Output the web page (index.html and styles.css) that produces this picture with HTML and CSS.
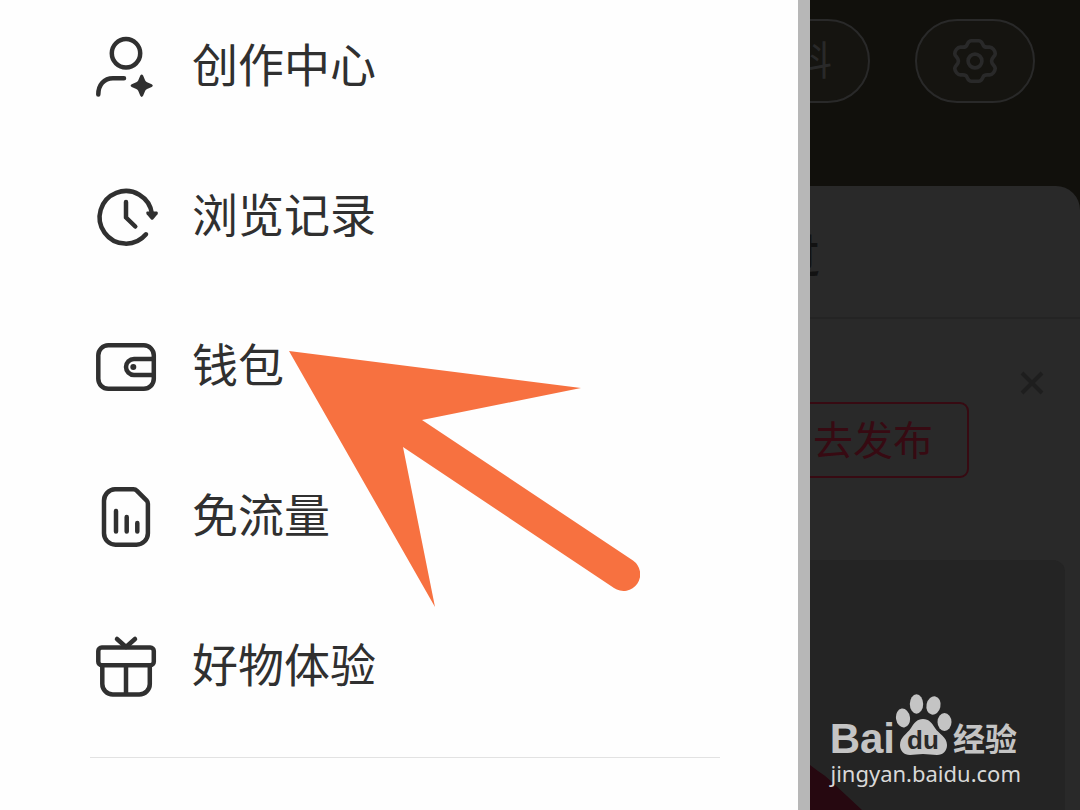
FILE: index.html
```html
<!DOCTYPE html>
<html lang="zh-CN">
<head>
<meta charset="UTF-8">
<meta name="viewport" content="width=device-width, initial-scale=1.0">
<title>钱包</title>
<link rel="stylesheet" href="styles.css">
</head>
<body>

<!-- dimmed profile page behind the drawer -->
<main class="profile">
  <div class="profile-actions">
    <button class="pill" type="button">编辑资料</button>
    <button class="pill pill-icon" type="button" aria-label="设置">
      <svg width="46" height="48" viewBox="-25 -25 50 50">
        <path d="M-4-22h8c2 0 3 1 4 3l1 2c1 2 2 2 4 2h3c3 0 6 4 6 7 0 3-4 4-4 8s4 5 4 8c0 3-3 7-6 7h-3c-2 0-3 0-4 2l-1 2c-1 2-2 3-4 3h-8c-2 0-3-1-4-3l-1-2c-1-2-2-2-4-2h-3c-3 0-6-4-6-7 0-3 4-4 4-8s-4-5-4-8c0-3 3-7 6-7h3c2 0 3 0 4-2l1-2c1-2 2-3 4-3z"/>
        <circle r="7.5"/>
      </svg>
    </button>
  </div>

  <section class="sheet">
    <div class="tabs"><span class="tab">赞过</span></div>
    <div class="publish">
      <button class="close" type="button" aria-label="关闭">
        <svg width="24" height="24" viewBox="0 0 24 24"><path d="M2 2l20 20M22 2L2 22"/></svg>
      </button>
      <button class="publish-btn" type="button">去发布</button>
    </div>
    <div class="photo">
      <svg class="photo-shape" width="60" height="50" viewBox="0 0 60 50"><path d="M0 5l8 6q8 5 14 11l30 28H0z"/></svg>
    </div>
  </section>
</main>

<aside class="drawer">
  <nav class="menu">
    <a class="menu-item" href="#">
      <svg class="icon" viewBox="0 0 64 64">
        <circle cx="32" cy="18.3" r="14.2"/>
        <path d="M4.3 59.5C4.3 50 10 43.3 19 43.3h11"/>
        <path class="fill" d="M46.3 40.5q1.4-2.2 2.8 0l2.1 5q.6 1.3 1.9 1.8l4.6 1.9q2.2 1.4 0 2.8l-4.6 1.9q-1.3.6-1.9 1.9l-2.1 5q-1.4 2.2-2.8 0l-2.1-5q-.6-1.3-1.9-1.9L37.7 52q-2.2-1.4 0-2.8l4.6-1.9q1.3-.5 1.9-1.8z"/>
      </svg>
      <span>创作中心</span>
    </a>
    <a class="menu-item" href="#">
      <svg class="icon" viewBox="0 0 64 64">
        <path d="M52 49.3A26.3 26.3 0 1 1 58 29"/>
        <path class="fill" d="M53 26.5h10q1.500 1 .5 2.700l-4.400 5.200q-1 .9-2 0l-4.400-5.200q-1-1.700.3-2.700z"/>
        <path d="M32 17v15.500l9.300 9"/>
      </svg>
      <span>浏览记录</span>
    </a>
    <a class="menu-item" href="#">
      <svg class="icon" viewBox="0 0 64 64">
        <rect x="4.300" y="10.300" width="55.500" height="43.500" rx="10"/>
        <path d="M59 24H40a8 8 0 0 0 0 16h19"/>
        <circle class="fill" cx="39.300" cy="32" r="3"/>
      </svg>
      <span>钱包</span>
    </a>
    <a class="menu-item" href="#">
      <svg class="icon" viewBox="0 0 64 64">
        <path d="M21 4.300h18.500q2 0 3.500 1.500l9.500 9.500q1.400 1.500 1.400 3.500V48a11.500 11.500 0 0 1-11.500 11.700H21.500A11.500 11.500 0 0 1 10 48V16A11.500 11.500 0 0 1 21 4.300z"/>
        <path d="M22 26v20.500M32.700 32v14.500M43.300 38v8.500"/>
      </svg>
      <span>免流量</span>
    </a>
    <a class="menu-item" href="#">
      <svg class="icon" viewBox="0 0 64 64">
        <rect x="4.300" y="12.500" width="55.500" height="17.700" rx="3.500"/>
        <path d="M8.300 31v18a10.500 10.500 0 0 0 10.500 10.500h26.500A10.500 10.500 0 0 0 55.800 49V31M32 31v28M23 4l9 8 9-8"/>
      </svg>
      <span>好物体验</span>
    </a>
  </nav>
  <hr class="divider">
</aside>

<!-- arrow pointing at the wallet entry -->
<svg class="arrow" width="352" height="258" viewBox="288 350 352 258">
  <path d="M289 351L581 388 422 420 633 560.500A16.500 16.500 0 0 1 614 588L403 447 435 607z"/>
</svg>

<div class="watermark">
  <div class="logo">
    <span class="logo-bai">Bai</span>
    <svg class="paw" width="58" height="62" viewBox="0 0 58 62">
      <ellipse cx="8" cy="24" rx="7" ry="9.500" transform="rotate(-8 8 24)"/>
      <ellipse cx="21.500" cy="10" rx="6.700" ry="9.700"/>
      <ellipse cx="38.500" cy="11.500" rx="7" ry="9.300" transform="rotate(12 38.500 11.500)"/>
      <ellipse cx="49.500" cy="28" rx="7" ry="9"/>
      <path d="M28 25c6 0 9 4 12 9 4 6 12 9 12 17 0 6-4 10-10 10-5 0-9-1-14-1s-9 1-13 1C9 61 5 57 5 51c0-8 7-11 11-17 3-5 6-9 12-9z"/>
      <text x="28" y="55" text-anchor="middle">du</text>
    </svg>
    <span class="logo-cn">经验</span>
  </div>
  <div class="url">jingyan.baidu.com</div>
</div>

</body>
</html>
```

FILE: styles.css
```css
* {
  box-sizing: border-box;
}
body {
  margin: 0;
  position: relative;
  min-height: 100vh;
  overflow: hidden;
  background-color: #11100c;
  font-family: "Noto Sans CJK SC", sans-serif;
}
button {
  font-family: inherit;
  background: none;
  padding: 0;
}

/* profile page */
.profile {
  display: flex;
  flex-direction: column;
  min-height: 100vh;
}
.profile-actions {
  display: flex;
  justify-content: flex-end;
  gap: 45px;
  padding: 19px 45px 83px;
}
.pill {
  height: 84px;
  padding: 0 36px 6px;
  border: 2px solid #292929;
  border-radius: 42px;
  background-color: #151410;
  color: #292929;
  font-size: 40px;
  line-height: 74px;
}
.pill-icon {
  display: flex;
  align-items: center;
  justify-content: center;
  width: 120px;
  padding: 0;
}
.pill svg {
  fill: none;
  stroke: #292929;
  stroke-width: 4;
}
.sheet {
  flex: 1;
  display: flex;
  flex-direction: column;
  border-radius: 24px 24px 0 0;
  background-color: #292929;
}
.tabs {
  display: flex;
  justify-content: flex-end;
  height: 133px;
  padding: 34px 260px 0;
  border-bottom: 2px solid #242424;
}
.tab {
  color: #121212;
  font-size: 46px;
  font-weight: 500;
  line-height: 66px;
}
.publish {
  display: flex;
  flex-direction: column;
  align-items: flex-end;
  gap: 7px;
  padding: 52px 36px 82px;
}
.close {
  display: flex;
  border: 0;
}
.close svg {
  fill: none;
  stroke: #1e1e1e;
  stroke-width: 4;
}
.publish-btn {
  height: 76px;
  margin-right: 75px;
  padding: 0 34px 4px;
  border: 2px solid #370a12;
  border-radius: 9px;
  color: #370a12;
  font-size: 40px;
  line-height: 68px;
}
.photo {
  flex: 1;
  display: flex;
  align-items: flex-end;
  margin-right: 15px;
  padding-left: 75%;
  border-radius: 0 12px 0 0;
  background-color: #242424;
}
.photo-shape {
  fill: #260810;
}

/* drawer */
.drawer {
  position: absolute;
  top: 0;
  bottom: 0;
  left: 0;
  width: 75%;
  padding: 35px 78px 0 90px;
  border-right: 12px solid #b7b7b7;
  background-color: #fefefe;
}
.menu {
  display: flex;
  flex-direction: column;
  gap: 86px;
  padding-left: 4px;
}
.menu-item {
  display: flex;
  align-items: flex-start;
  gap: 34px;
  height: 64px;
  color: #303030;
  font-size: 46px;
  line-height: 54px;
  text-decoration: none;
}
.icon {
  width: 64px;
  height: 64px;
  fill: none;
  stroke: #303030;
  stroke-width: 4.5;
  stroke-linecap: round;
  stroke-linejoin: round;
}
.icon .fill {
  fill: #303030;
  stroke: none;
}
.divider {
  margin: 58px 0 0;
  border: 0;
  border-top: 1px solid #e2e2e2;
}

.arrow {
  position: absolute;
  top: 350px;
  left: 288px;
  fill: #f77140;
}

/* watermark */
.watermark {
  position: absolute;
  right: 59px;
  bottom: 20px;
  color: #c4c4c4;
}
.logo {
  display: flex;
  align-items: flex-end;
  justify-content: flex-end;
  height: 62px;
  padding-right: 4px;
}
.logo-bai {
  font-family: "Liberation Sans", sans-serif;
  font-size: 42px;
  font-weight: bold;
  line-height: 34px;
}
.paw {
  fill: #c4c4c4;
}
.paw text {
  fill: #292929;
  font-family: "Liberation Sans", sans-serif;
  font-size: 26px;
  font-weight: bold;
}
.logo-cn {
  font-size: 32px;
  font-weight: bold;
  line-height: 38px;
}
.url {
  color: #d8d8d8;
  font-family: "Noto Sans", sans-serif;
  font-size: 22px;
  line-height: 34px;
  text-align: right;
}
```
